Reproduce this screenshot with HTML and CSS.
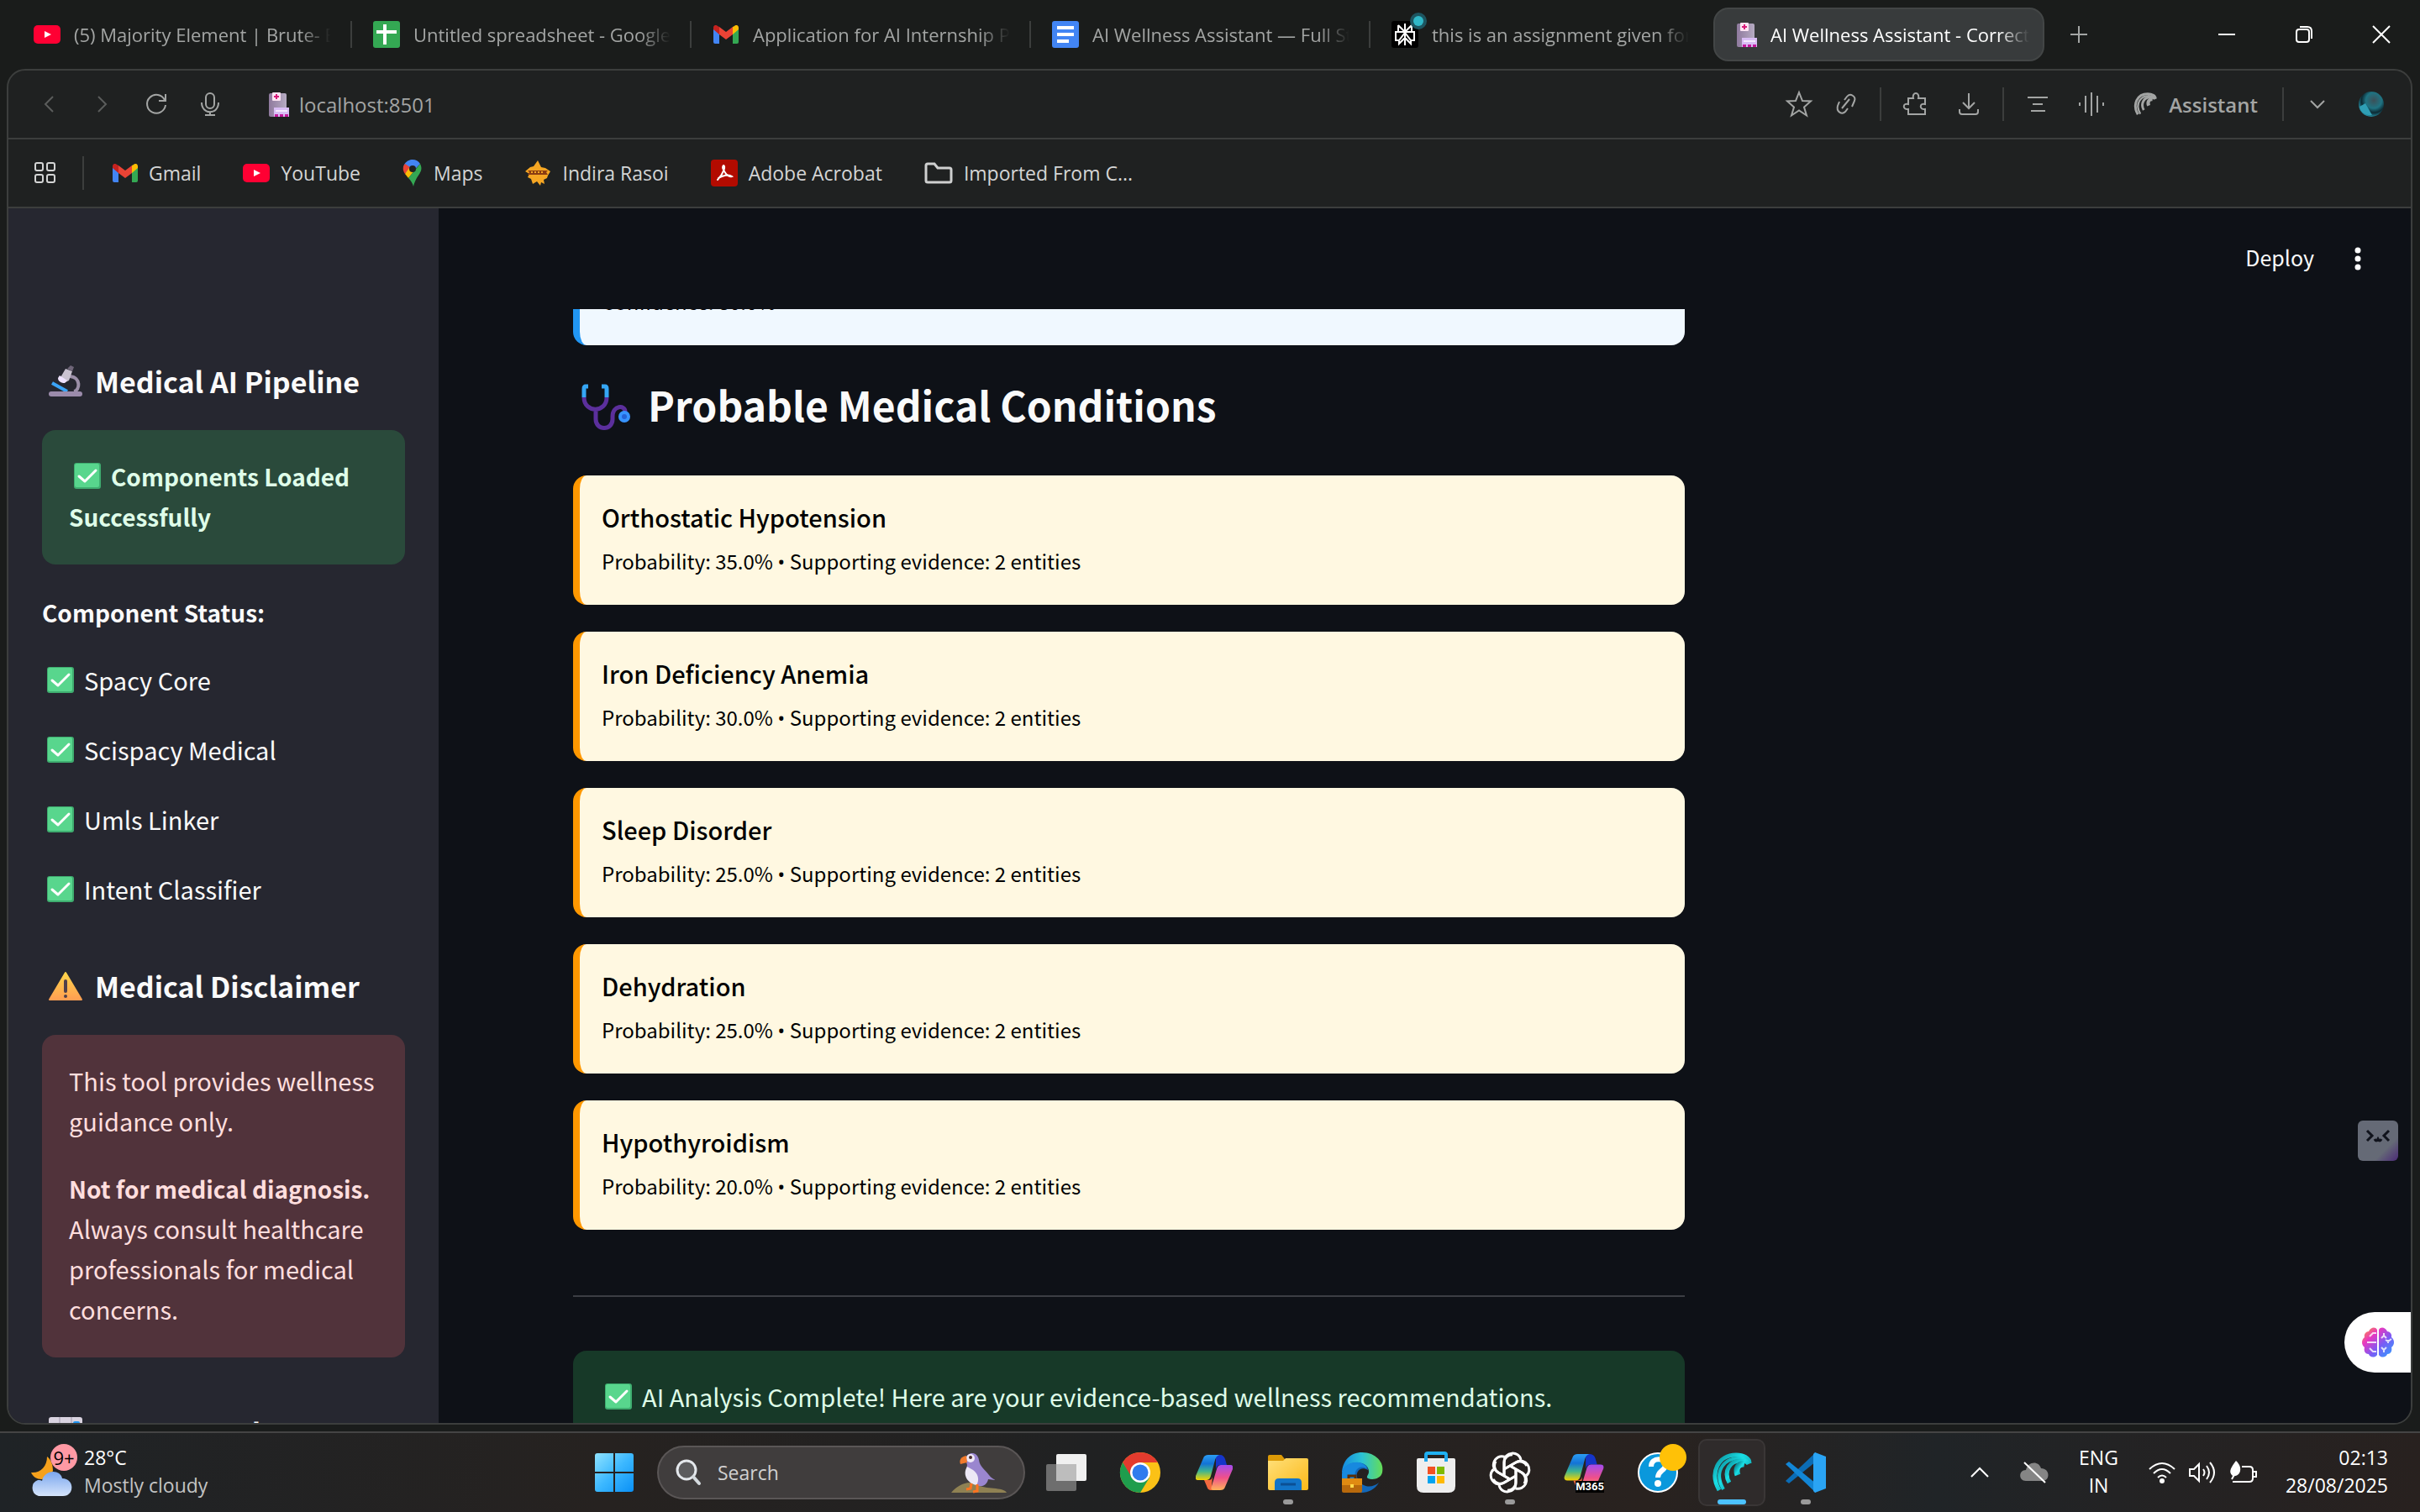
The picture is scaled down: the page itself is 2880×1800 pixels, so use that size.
FILE: index.html
```html
<!DOCTYPE html>
<html lang="en">
<head>
<meta charset="utf-8">
<title>AI Wellness Assistant</title>
<link rel="stylesheet" href="styles.css">
</head>
<body>
<svg class="defs" aria-hidden="true">
  <defs>
    <linearGradient id="copA" x1="0" y1="0" x2="0" y2="1"><stop offset="0" stop-color="#2b9df4"/><stop offset=".35" stop-color="#1373d6"/><stop offset=".65" stop-color="#3fb58f"/><stop offset="1" stop-color="#f6d300"/></linearGradient>
    <linearGradient id="copB" x1="0" y1="0" x2="0" y2="1"><stop offset="0" stop-color="#a24bf0"/><stop offset=".5" stop-color="#f0508a"/><stop offset="1" stop-color="#ffb35a"/></linearGradient>
    <linearGradient id="win" x1="0" y1="0" x2="1" y2="1"><stop offset="0" stop-color="#8fe3ff"/><stop offset=".5" stop-color="#3cb8ff"/><stop offset="1" stop-color="#0a90f5"/></linearGradient>
    <linearGradient id="edge" x1="0" y1="0" x2="1" y2="0"><stop offset="0" stop-color="#1489e0"/><stop offset=".5" stop-color="#2cc3d4"/><stop offset="1" stop-color="#66dd55"/></linearGradient>
    <linearGradient id="comet" x1="0" y1="0" x2="1" y2="1"><stop offset="0" stop-color="#0a8a96"/><stop offset=".4" stop-color="#19dfe6"/><stop offset="1" stop-color="#0b7a88"/></linearGradient>
    <linearGradient id="brain" x1="0" y1="0" x2="1" y2="1"><stop offset="0" stop-color="#ff9d2e"/><stop offset=".3" stop-color="#e838c0"/><stop offset=".6" stop-color="#7a5cf5"/><stop offset="1" stop-color="#2aa5ff"/></linearGradient>
    <linearGradient id="cloud" x1="0" y1="0" x2="0" y2="1"><stop offset="0" stop-color="#7ba7ee"/><stop offset="1" stop-color="#d5e4fb"/></linearGradient>
    <linearGradient id="folder" x1="0" y1="0" x2="1" y2="1"><stop offset="0" stop-color="#ffe07a"/><stop offset="1" stop-color="#fbb818"/></linearGradient>
    <linearGradient id="warn" x1="0" y1="0" x2="0" y2="1"><stop offset="0" stop-color="#ffd54a"/><stop offset="1" stop-color="#ff9f52"/></linearGradient>
    <linearGradient id="tower" x1="0" y1="0" x2="1" y2="0"><stop offset="0" stop-color="#8f7a9e"/><stop offset="1" stop-color="#b6abc2"/></linearGradient>
    <radialGradient id="orb" cx=".6" cy=".35" r=".7"><stop offset="0" stop-color="#3c5058"/><stop offset=".45" stop-color="#1f7382"/><stop offset=".7" stop-color="#0d2a33"/><stop offset="1" stop-color="#2aa6bd"/></radialGradient>
    <symbol id="i-check" viewBox="0 0 32 32"><rect width="32" height="31" rx="3" fill="#3fae70"/><rect x="1" y="1" width="29" height="28" rx="2" fill="#58d68d"/><path d="M6 16l7 6L26 9" fill="none" stroke="#fff" stroke-width="3" stroke-linecap="round" stroke-linejoin="round"/></symbol>
    <symbol id="i-gmail" viewBox="0 0 30 22"><path d="M0 3v17a2 2 0 0 0 2 2h5V8z" fill="#4285f4"/><path d="M23 8v14h5a2 2 0 0 0 2-2V3z" fill="#34a853"/><path d="M23 2v9l7-6V3c0-3-3-4-5-2z" fill="#fbbc04"/><path d="M7 2v9L0 5V3c0-3 3-4 5-2z" fill="#c5221f"/><path d="M7 11V2l8 6 8-6v9l-8 6z" fill="#ea4335"/></symbol>
    <symbol id="i-yt" viewBox="0 0 32 22"><rect width="32" height="22" rx="5" fill="#f03"/><path d="M13 7l8 4-8 4z" fill="#fff"/></symbol>
    <symbol id="i-hospital" viewBox="0 0 24 29"><rect y="1" width="21" height="28" rx="2" fill="url(#tower)"/><rect x="4" width="10" height="10" rx="1" fill="#fbe3f2"/><path d="M9 2v6M6 5h6" stroke="#d81b7a" stroke-width="2"/><rect x="6" y="18" width="18" height="11" fill="#d9bdf5"/><path d="M8 22h14" stroke="#f5eaff" stroke-width="2"/><path d="M7 27.500h4M13 27.500h4M19 27.500h4" stroke="#c2189c" stroke-width="3"/></symbol>
    <symbol id="i-cop" viewBox="0 0 44 42"><path d="M24 0h5c3 0 5 2 6 5l2 7h-7c-4 0-5 2-6 5z" fill="#1535c9"/><path d="M9 4c1-3 3-4 6-4h13c-3 1-4 3-5 6l-5 19c-1 4-3 5-6 5H3c-3 0-4-2-3-5z" fill="url(#copA)"/><path d="M10 30h5c3 0 4-1 5-4l-1 11c0 4 3 5 6 5h-6c-4 0-5-2-6-5z" fill="#f4693f"/><path d="M35 38c-1 3-3 4-6 4h-8c-3 0-3-2-2-5l6-20c1-4 3-5 6-5h10c3 0 4 2 3 5z" fill="url(#copB)"/></symbol>
    <symbol id="i-comet" viewBox="0 0 48 48"><g fill="none" stroke-linecap="butt"><path d="M9 45C-3 24 8 3 29 3c9 0 16 4 16 10" stroke-width="5"/><path d="M14 44C1 21 17 6 33 7c6 0 10 3 11 6" stroke-width="4"/><path d="M21 36c-8-14 2-27 14-26 5 0 8 2 9 4" stroke-width="5"/><path d="M31 27c-3-8 1-14 8-13" stroke-width="7"/></g></symbol>
  </defs>
</svg>

<header class="tabs">
  <nav class="tablist" aria-label="Tabs">
    <a class="tab" href="#"><svg class="fav" width="32" height="22"><use href="#i-yt"/></svg><span class="tab-name">(5) Majority Element | Brute- Better</span></a>
    <a class="tab" href="#"><svg class="fav" width="32" height="32" viewBox="0 0 32 32"><rect width="32" height="32" rx="3" fill="#34a853"/><path d="M14 4v24M4 13h24" stroke="#fff" stroke-width="4"/></svg><span class="tab-name">Untitled spreadsheet - Google Sheets</span></a>
    <a class="tab" href="#"><svg class="fav" width="32" height="22"><use href="#i-gmail"/></svg><span class="tab-name">Application for AI Internship Position</span></a>
    <a class="tab" href="#"><svg class="fav" width="32" height="32" viewBox="0 0 32 32"><rect width="32" height="32" rx="3" fill="#4285f4"/><path d="M6 8h20M6 16h20M6 24h14" stroke="#fff" stroke-width="4"/></svg><span class="tab-name">AI Wellness Assistant — Full Stack</span></a>
    <a class="tab" href="#"><svg class="fav" width="32" height="32" viewBox="0 0 32 32"><rect width="32" height="32" rx="3" fill="#000"/><path d="M16 3v26M8 5l8 8 8-8v9M8 5v9M5 13h22v10h-4l-7-9-7 9H5zM9 22v5l7-7 7 7v-5" fill="none" stroke="#fff" stroke-width="2"/><circle cx="32" cy="0" r="10" fill="#1d5560"/><circle cx="32" cy="0" r="6" fill="#30b8c8"/></svg><span class="tab-name">this is an assignment given for the</span></a>
    <a class="tab active" href="#" aria-current="page"><svg class="fav" width="24" height="29"><use href="#i-hospital"/></svg><span class="tab-name">AI Wellness Assistant - Corrected</span></a>
  </nav>
  <button class="icon-btn" aria-label="New tab"><svg width="20" height="20" viewBox="0 0 20 20"><path d="M10 0v20M0 10h20"/></svg></button>
  <div class="win-btns">
    <button class="icon-btn" aria-label="Minimise"><svg width="20" height="20" viewBox="0 0 20 20"><path d="M0 10h20"/></svg></button>
    <button class="icon-btn" aria-label="Restore"><svg width="20" height="20" viewBox="0 0 20 20"><rect x="1" y="4" width="15" height="15" rx="3"/><path d="M5 1h9q5 0 5 5v9"/></svg></button>
    <button class="icon-btn" aria-label="Close"><svg width="20" height="20" viewBox="0 0 20 20"><path d="M0 0l20 20M20 0L0 20"/></svg></button>
  </div>
</header>

<section class="window">
  <div class="toolbar">
    <div class="tools tools-left">
      <button class="icon-btn dim" aria-label="Back"><svg width="12" height="20" viewBox="0 0 12 20"><path d="M11 1L2 10l9 9"/></svg></button>
      <button class="icon-btn dim" aria-label="Forward"><svg width="12" height="20" viewBox="0 0 12 20"><path d="M1 1l9 9-9 9"/></svg></button>
      <button class="icon-btn" aria-label="Reload"><svg width="26" height="26" viewBox="0 0 26 26"><path d="M23 8A11 11 0 1 0 24 14M24 1v8h-8"/></svg></button>
      <button class="icon-btn" aria-label="Voice"><svg width="24" height="30" viewBox="0 0 24 30"><rect x="7" y="2" width="10" height="18" rx="5"/><path d="M2 13c0 15 20 15 20 0M12 24v4M6 28h12"/></svg></button>
    </div>
    <label class="address"><svg width="24" height="29"><use href="#i-hospital"/></svg><input type="text" value="localhost:8501" aria-label="Address"></label>
    <div class="tools tools-right">
      <button class="icon-btn star" aria-label="Bookmark"><svg width="32" height="32" viewBox="0 0 32 32"><path d="M16 2l4 10 10 .5-8 7 3 10-9-6-9 6 3-10-8-7 10-.5z"/></svg></button>
      <button class="icon-btn" aria-label="Copy link"><svg width="24" height="26" viewBox="0 0 24 26"><path d="M7 18l9-11M4 10l-2 5c-2 7 5 11 9 7l3-4M10 8l3-4c4-5 11 0 9 5l-3 7"/></svg></button>
      <span class="bar"></span>
      <button class="icon-btn" aria-label="Extensions"><svg width="30" height="30" viewBox="0 0 30 30"><path d="M7 8h6c-2-8 8-8 6 0h8v7c-7-2-7 7 0 6v6H7v-6c-7 1-7-8 0-6z"/></svg></button>
      <button class="icon-btn" aria-label="Downloads"><svg width="24" height="26" viewBox="0 0 24 26"><path d="M12 0v17M5 11l7 7 7-7M1 19v3q0 3 3 3h16q3 0 3-3v-3"/></svg></button>
      <span class="bar"></span>
      <button class="icon-btn" aria-label="Summary"><svg width="24" height="20" viewBox="0 0 24 20"><path d="M0 2h24M6 10h12M4 18h17"/></svg></button>
      <button class="icon-btn" aria-label="Voice mode"><svg width="32" height="30" viewBox="0 0 32 30"><path d="M2 13v4M9 5v20M16 1v28M23 5v20M30 13v4"/></svg></button>
      <button class="assistant"><svg width="28" height="30" viewBox="0 0 48 48" stroke="#a3a5a4"><use href="#i-comet"/></svg>Assistant</button>
      <span class="bar"></span>
      <button class="icon-btn" aria-label="More"><svg width="18" height="10" viewBox="0 0 18 10"><path d="M1 1l8 8 8-8"/></svg></button>
      <button class="icon-btn" aria-label="Profile"><svg width="32" height="32" viewBox="0 0 32 32"><circle class="filled" cx="16" cy="16" r="15" fill="url(#orb)"/><path class="filled" d="M9 15l8 14c-7 1-14-3-15-10z" fill="#2f9fb5"/></svg></button>
    </div>
  </div>

  <nav class="bookmarks" aria-label="Bookmarks">
    <button class="icon-btn" aria-label="Apps"><svg width="26" height="26" viewBox="0 0 26 26"><rect x="1" y="1" width="9" height="9" rx="2"/><rect x="15" y="1" width="9" height="9" rx="2"/><rect x="1" y="15" width="9" height="9" rx="2"/><rect x="15" y="15" width="9" height="9" rx="2"/></svg></button>
    <span class="bar"></span>
    <a href="#"><svg width="30" height="22"><use href="#i-gmail"/></svg>Gmail</a>
    <a href="#"><svg width="32" height="22"><use href="#i-yt"/></svg>YouTube</a>
    <a href="#"><svg width="24" height="32" viewBox="0 0 24 32"><path d="M12 0a11 11 0 0 1 9 5L8 19l-5-4C-2 7 5 0 12 0z" fill="#4285f4"/><path d="M3 5C0 8 0 13 3 17l6-8z" fill="#ea4335"/><path d="M3 17l4 5 9-11-8-1z" fill="#fbbc04"/><path d="M21 5c5 10-4 12-8 27-1-4-3-7-6-10z" fill="#34a853"/><circle cx="12" cy="11" r="4" fill="#1f2121"/></svg>Maps</a>
    <a href="#"><svg width="32" height="32" viewBox="0 0 32 32"><path d="M16 1l4 8 5 1 6 4-3 5-1 3-4 2 1 5-4-2-1 4-4-5-5 3-2-6-4-2 2-4-5-3 6-5 4-1z" fill="#f5a623"/><path d="M4 13l2 2-2 3h24l-2-3 2-2z" fill="#8a3c12"/><path d="M8 15h16" stroke="#f5a623" stroke-width="2" stroke-dasharray="2 2"/></svg>Indira Rasoi</a>
    <a href="#"><svg width="32" height="32" viewBox="0 0 32 32"><rect width="32" height="32" rx="4" fill="#b30b00"/><path d="M15 7c3 0 0 10-7 17M15 7c-3 2 4 15 10 13-4-3-11-1-16 2" fill="none" stroke="#fff" stroke-width="2" stroke-linecap="round"/></svg>Adobe Acrobat</a>
    <a href="#"><svg width="34" height="26" viewBox="0 0 34 26"><path d="M2 4q0-2 2-2h8l4 5h14q2 0 2 2v13q0 2-2 2H4q-2 0-2-2z" fill="none" stroke="#cfd0d0" stroke-width="3"/></svg>Imported From C...</a>
  </nav>

  <div class="page">
    <aside class="sidebar">
      <h3><svg width="40" height="38" viewBox="0 0 40 38"><path d="M25 13c14 1 12 17 5 18" fill="none" stroke="#9b8fa8" stroke-width="4"/><path d="M4 21l18 10" stroke="#3ba4f7" stroke-width="4"/><path d="M13 16L20 4l8 3-4 11-6 3z" fill="#c9c2d0"/><path d="M22 4l4-4 4 2-2 5z" fill="#6e6578"/><path d="M13 12l9 6-3 3c-4 0-8-2-8-6z" fill="#efe3ff"/><rect y="31" width="40" height="6" rx="3" fill="#9b8bab"/></svg>Medical AI Pipeline</h3>
      <div class="alert success"><strong><svg class="emoji" width="32" height="32"><use href="#i-check"/></svg>Components Loaded Successfully</strong></div>
      <p><strong>Component Status:</strong></p>
      <p class="status"><svg class="emoji" width="32" height="32"><use href="#i-check"/></svg>Spacy Core</p>
      <p class="status"><svg class="emoji" width="32" height="32"><use href="#i-check"/></svg>Scispacy Medical</p>
      <p class="status"><svg class="emoji" width="32" height="32"><use href="#i-check"/></svg>Umls Linker</p>
      <p class="status"><svg class="emoji" width="32" height="32"><use href="#i-check"/></svg>Intent Classifier</p>
      <h3><svg width="40" height="36" viewBox="0 0 40 36"><path d="M20 2L39 34H1z" fill="url(#warn)" stroke="url(#warn)" stroke-width="2" stroke-linejoin="round"/><path d="M20 12v12" stroke="#50404a" stroke-width="4" stroke-linecap="round"/><circle cx="20" cy="30" r="2" fill="#50404a"/></svg>Medical Disclaimer</h3>
      <div class="alert error"><p>This tool provides wellness guidance only.</p><p><strong>Not for medical diagnosis.</strong> Always consult healthcare professionals for medical concerns.</p></div>
      <h3><svg width="40" height="38" viewBox="0 0 40 38"><rect width="40" height="38" rx="3" fill="#d9d3e0"/><path d="M13 0v38M27 0v38" stroke="#bdb6c6" stroke-width="2"/><rect x="3" y="10" width="8" height="26" rx="2" fill="#7bc843"/><rect x="29" y="5" width="8" height="31" rx="2" fill="#2196f3"/></svg>Recent Analyses</h3>
    </aside>

    <main class="main">
      <div class="app-bar"><button class="deploy">Deploy</button><button class="icon-btn" aria-label="Menu"><svg width="8" height="28" viewBox="0 0 8 28"><circle class="filled" cx="4" cy="4" r="3.500" fill="#fff"/><circle class="filled" cx="4" cy="14" r="3.500" fill="#fff"/><circle class="filled" cx="4" cy="24" r="3.500" fill="#fff"/></svg></button></div>
      <div class="scroll">
        <div class="content">
          <article class="card blue"><h4>Dizziness</h4><p>Confidence: 80.0%</p></article>
          <h2><svg width="58" height="54" viewBox="0 0 58 54"><path d="M7 2H4q-2 0-2 3v10M23 2h4q2 0 2 3v10" fill="none" stroke="#35a6f5" stroke-width="5"/><path d="M2 15c0 19 27 19 27 0M16 30v11c0 14 20 14 20 0V38c0-14 15-14 15-6" fill="none" stroke="#5b2f9c" stroke-width="5"/><circle cx="50" cy="38" r="7" fill="#3793ff"/><circle cx="50" cy="38" r="3" fill="#2463d6"/></svg>Probable Medical Conditions</h2>
          <article class="card"><h4>Orthostatic Hypotension</h4><p>Probability: 35.0% <span class="dot">•</span> Supporting evidence: 2 entities</p></article>
          <article class="card"><h4>Iron Deficiency Anemia</h4><p>Probability: 30.0% <span class="dot">•</span> Supporting evidence: 2 entities</p></article>
          <article class="card"><h4>Sleep Disorder</h4><p>Probability: 25.0% <span class="dot">•</span> Supporting evidence: 2 entities</p></article>
          <article class="card"><h4>Dehydration</h4><p>Probability: 25.0% <span class="dot">•</span> Supporting evidence: 2 entities</p></article>
          <article class="card"><h4>Hypothyroidism</h4><p>Probability: 20.0% <span class="dot">•</span> Supporting evidence: 2 entities</p></article>
          <hr>
          <div class="alert done"><svg class="emoji" width="32" height="32"><use href="#i-check"/></svg>AI Analysis Complete! Here are your evidence-based wellness recommendations.</div>
        </div>
      </div>
    </main>
  </div>
  <button class="face" aria-label="Helper"><svg width="28" height="16" viewBox="0 0 28 16"><path d="M1 1l6 6-6 6M27 1l-6 6 6 6M10 11q2 4 4 0 2 4 4 0" fill="none" stroke="#10131c" stroke-width="3"/></svg></button>
  <button class="brain" aria-label="Brain assistant"><svg width="38" height="36" viewBox="0 0 38 36"><path d="M18 3v30c-3 4-9 3-10-1-5 0-6-5-5-8-4-3-4-9 0-12-1-4 2-7 5-7 2-5 8-6 10-2zM20 3v30c3 4 9 3 10-1 5 0 6-5 5-8 4-3 4-9 0-12 1-4-2-7-5-7-2-5-8-6-10-2z" fill="url(#brain)"/><path d="M17 7h-4l-4 4M17 18H6M17 29h-4l-4-4M26 7v3l-3 3M26 10l3 3M31 19v-4M28 15l3 2 4-3M23 24l3 3 3-3M26 27v3" fill="none" stroke="#fff" stroke-opacity=".8" stroke-width="2"/></svg></button>
</section>

<footer class="taskbar">
  <button class="weather"><svg width="50" height="58" viewBox="0 0 50 58"><path d="M20 10c0 12-8 20-19 19 4 10 20 12 26-2 0-7-2-13-7-17z" fill="#f5a11c"/><path d="M10 57a10 10 0 0 1-1-19c3 0 4 0 5 1 3-14 22-14 24-3 15 0 15 21 1 21z" fill="url(#cloud)"/></svg><span class="badge">9+</span><span class="two"><span>28°C</span><span class="soft">Mostly cloudy</span></span></button>
  <div class="apps">
    <button class="app" aria-label="Start"><svg width="46" height="46" viewBox="0 0 46 46"><path d="M3 0h19v22H0V3q0-3 3-3zM24 0h19q3 0 3 3v19H24zM0 24h22v22H3q-3 0-3-3zM24 24h22v19q0 3-3 3H24z" fill="url(#win)"/></svg></button>
    <label class="search"><svg width="30" height="30" viewBox="0 0 30 30"><circle cx="13" cy="12" r="11" fill="#5c5c5e" stroke="#e4e8ec" stroke-width="3"/><path d="M21 20l7 8" stroke="#d4dade" stroke-width="4" stroke-linecap="round"/></svg><input type="text" placeholder="Search" aria-label="Search"><svg width="66" height="48" viewBox="0 0 66 48"><path d="M0 48c8-10 22-16 32-9 8 5 30 2 34 9z" fill="#8f8153"/><path d="M17 8c2-9 14-10 16 1 1 8 6 10 12 18 4 5 7 5 7 6l-8-1c-1 5-5 9-10 8-10-1-18-12-15-25z" fill="#9a86cf"/><path d="M19 17c-6 9 0 20 11 22 4-6 2-14-4-18z" fill="#ece8f5"/><circle cx="23" cy="7" r="5" fill="#efe9f6"/><circle cx="23" cy="6" r="2" fill="#4a2c2c"/><path d="M18 4c-6 1-9 5-7 10l8-2z" fill="#f07a2c"/><path d="M24 37l-1 6-5 1M31 38v8l-5 1" fill="none" stroke="#ff7320" stroke-width="3"/></svg></label>
    <button class="app" aria-label="Task view"><svg width="48" height="44" viewBox="0 0 48 44"><rect x="12" width="36" height="32" rx="2" fill="#f0f0f0"/><rect y="12" width="36" height="32" rx="2" fill="#6e6e6e"/><rect x="12" y="12" width="24" height="20" fill="#bdbdbd"/></svg></button>
    <button class="app" aria-label="Chrome"><svg width="48" height="48" viewBox="0 0 48 48"><circle cx="24" cy="24" r="24" fill="#fbc116"/><path d="M3.200 12A24 24 0 0 1 44.800 12H24L13 30z" fill="#e33b2e"/><path d="M3.200 12A24 24 0 0 0 24 48l11-18-11 5-10-5z" fill="#1f9d4d"/><circle cx="24" cy="24" r="12" fill="#fff"/><circle cx="24" cy="24" r="9.500" fill="#2f7bee"/></svg></button>
    <button class="app" aria-label="Copilot"><svg width="44" height="42"><use href="#i-cop"/></svg></button>
    <button class="app open" aria-label="Explorer"><svg width="48" height="42" viewBox="0 0 48 42"><path d="M0 2q0-2 2-2h14l4 5v8H0z" fill="#dc9a06"/><path d="M0 7h18l3-3h25q2 0 2 2v34q0 2-2 2H2q-2 0-2-2z" fill="url(#folder)"/><path d="M8 42V33q0-5 5-5h22q5 0 5 5v9z" fill="#1274c8"/><path d="M15 35h18" stroke="#0b4f94" stroke-width="3"/></svg></button>
    <button class="app" aria-label="Edge"><svg width="48" height="48" viewBox="0 0 48 48"><path d="M0 26C0 10 10 0 24 0c16 0 27 12 24 24-2 8-12 9-17 7-3-2 1-4 1-8 0-6-5-10-12-10C10 13 2 18 0 26z" fill="url(#edge)"/><path d="M0 26c2-9 9-14 18-14 8 0 13 4 13 9-10-6-16 4-12 11 5 10 17 11 25 4-8 14-27 16-37 5C2 37 0 32 0 26z" fill="#1267b8"/><path d="M0 26C2 15 12 11 20 12c8 2 10 6 9 7-9-5-17 4-12 14H0z" fill="#1789df"/><rect y="31" width="24" height="17" rx="2" fill="#b8690c"/><path d="M0 31h24v8H0z" fill="#e08b12"/><path d="M8 31v-3h8v3" fill="none" stroke="#5a2d04" stroke-width="3"/><rect x="10" y="38" width="4" height="4" fill="#ffd94a"/></svg></button>
    <button class="app" aria-label="Store"><svg width="46" height="48" viewBox="0 0 46 48"><path d="M11 10V3q0-2 2-2h20q2 0 2 2v7" fill="none" stroke="#1fb1f2" stroke-width="4"/><path d="M0 9q0-2 2-2h42q2 0 2 2v31q0 8-8 8H8q-8 0-8-8z" fill="#eee"/><path d="M11 3v8M35 3v8" stroke="#1fa6ea" stroke-width="4"/><path d="M13 17h9v9h-9z" fill="#f25022"/><path d="M24 17h9v9h-9z" fill="#7fba00"/><path d="M13 28h9v9h-9z" fill="#00a4ef"/><path d="M24 28h9v9h-9z" fill="#ffb900"/></svg></button>
    <button class="app open" aria-label="ChatGPT"><svg width="48" height="48" viewBox="0 0 48 48"><g fill="none" stroke="#fff" stroke-width="3" stroke-linejoin="round"><g id="petal"><path d="M17 28V12c0-14 18-14 20-3M17 20l14-8c5-3 11 0 13 4"/></g><use href="#petal" transform="rotate(60 24 24)"/><use href="#petal" transform="rotate(120 24 24)"/><use href="#petal" transform="rotate(180 24 24)"/><use href="#petal" transform="rotate(240 24 24)"/><use href="#petal" transform="rotate(300 24 24)"/></g></svg></button>
    <button class="app" aria-label="M365 Copilot"><svg width="48" height="44"><use href="#i-cop"/></svg><span class="m365">M365</span></button>
    <button class="app" aria-label="Help"><svg width="48" height="48" viewBox="0 0 48 48"><circle cx="24" cy="24" r="23" fill="#0a98dc" stroke="#fff" stroke-width="2"/><path d="M16 17c0-12 18-11 17-1-1 6-9 6-9 14" fill="none" stroke="#fff" stroke-width="6"/><circle cx="24" cy="37" r="4" fill="#fff"/><circle cx="42" cy="6" r="16" fill="#ffc107"/></svg></button>
    <button class="app current" aria-label="Comet"><svg width="48" height="48" viewBox="0 0 48 48" stroke="url(#comet)"><use href="#i-comet"/></svg></button>
    <button class="app open" aria-label="Visual Studio Code"><svg width="48" height="48" viewBox="0 0 48 48"><path d="M0 34l4 3 32-26V0z" fill="#0b6cb5"/><path d="M0 14l4-3 32 26v11z" fill="#1286d6"/><path d="M35 0l13 5v38l-13 5-2-2V2z" fill="#2aa4f4"/></svg></button>
  </div>
  <div class="tray">
    <button class="icon-btn t-up" aria-label="Hidden icons"><svg width="22" height="12" viewBox="0 0 22 12"><path d="M1 11L11 1l10 10"/></svg></button>
    <button class="icon-btn t-cloud" aria-label="OneDrive"><svg width="34" height="26" viewBox="0 0 34 26"><path class="filled" d="M7 23c-9 0-9-13 0-13C9 0 22-2 25 8c11 0 11 15 2 15z" fill="#858585"/><path d="M5 1l25 24" /></svg></button>
    <button class="two center t-lang"><span>ENG</span><span>IN</span></button>
    <button class="net" aria-label="Network, sound, battery">
      <svg width="34" height="26" viewBox="0 0 34 26"><path d="M2 9q15-14 30 0M7 14q10-10 20 0M12 19q5-5 10 0"/><circle cx="17" cy="23" r="3" class="filled" fill="#fff"/></svg>
      <svg width="34" height="28" viewBox="0 0 34 28"><path d="M2 10h5l6-6v20l-6-6H2zM18 10q3 4 0 8M22 6q6 8 0 16M26 2q10 12 0 24"/></svg>
      <svg width="34" height="28" viewBox="0 0 34 28"><path d="M16 7h9q4 0 4 4v10q0 4-4 4H5M30 13h3v6h-3"/><path class="filled" d="M9 0c10 9 4 20-4 18C-1 13 4 7 9 0z" fill="#fff"/><path d="M4 22l5-9"/></svg>
    </button>
    <button class="two right"><span>02:13</span><span>28/08/2025</span></button>
  </div>
</footer>
</body>
</html>
```
FILE: styles.css
```css
* { box-sizing: border-box; }
html, body { height: 100%; }
body {
  margin: 0;
  display: flex;
  flex-direction: column;
  overflow: hidden;
  background: #1a1c1b;
  color: #fafafa;
  font-family: "Open Sans", "Noto Sans", sans-serif;
  font-size: 23px;
}
button, input { font: inherit; color: inherit; background: none; border: 0; padding: 0; margin: 0; outline: 0; }
a { color: inherit; text-decoration: none; }
h2, h3, h4, p { margin: 0; }
svg { flex: none; display: block; overflow: visible; }
.defs { position: absolute; width: 0; height: 0; }

.icon-btn { display: grid; place-items: center; width: 32px; height: 40px; flex: none; }
.icon-btn svg, .net svg { fill: none; stroke: currentColor; stroke-width: 2; }
.icon-btn .filled, .net .filled { stroke: none; }
.bar { width: 2px; height: 40px; background: #3c3e3d; flex: none; }

/* Tab strip */
.tabs { display: flex; align-items: center; height: 82px; flex: none; padding-left: 14px; color: #a3a5a4; font-size: 22px; }
.tablist { display: flex; margin-right: 25px; }
.tab { display: flex; align-items: center; gap: 16px; width: 404px; height: 64px; padding: 0 24px 0 26px; position: relative; }
.tab:not(.active):not(:nth-child(5))::after { content: ""; position: absolute; right: -1px; top: 16px; width: 2px; height: 32px; background: #3c3e3d; }
.tab.active { width: 394px; margin-left: 5px; padding: 0 16px 0 26px; border: 2px solid #434646; border-radius: 18px; background: #383b3c; color: #fff; }
.tab-name { flex: 1; overflow: hidden; white-space: nowrap; mask-image: linear-gradient(90deg, #000 88%, transparent); }
.win-btns { display: flex; gap: 60px; margin-left: auto; margin-right: 30px; color: #fff; }

/* Browser window */
.window { position: relative; flex: 1; min-height: 0; display: flex; flex-direction: column; margin: 0 9px 8px 8px; border: 2px solid #3c3e3d; border-radius: 22px; overflow: hidden; background: #1f2121; }
.toolbar, .bookmarks { display: flex; align-items: center; flex: none; height: 82px; border-bottom: 2px solid #3c3e3d; color: #a3a5a4; }
.tools { display: flex; align-items: center; }
.tools-left { gap: 32px; padding-left: 32px; }
.dim { color: #5b5d5c; }
.address { display: flex; align-items: center; gap: 12px; flex: 1; padding-left: 54px; font-size: 24px; }
.address input { flex: 1; }
.tools-right { padding-right: 15px; }
.tools-right .icon-btn { margin: 0 16px; }
.tools-right .star { margin-right: 8px; }
.tools-right .bar { margin: 0 8px; }
.assistant { display: flex; align-items: center; gap: 14px; margin: 0 21px 0 18px; font-size: 24px; font-weight: 600; }
.bookmarks { padding-left: 28px; color: #d4d5d5; }
.bookmarks .bar { margin: 0 34px 0 28px; }
.bookmarks a { display: flex; align-items: center; gap: 13px; margin-right: 50px; }

/* App page */
.page { display: flex; flex: 1; min-height: 0; font-family: "Noto Sans CJK SC", sans-serif; font-size: 29px; line-height: 48px; }
.sidebar { width: 512px; flex: none; display: flex; flex-direction: column; gap: 32px; padding: 148px 40px 0; background: #262730; overflow: hidden; }
.sidebar > * { flex: none; }
.sidebar h3 { display: flex; align-items: center; gap: 15px; padding: 33px 0 1px 8px; font-size: 34px; line-height: 50px; font-weight: 600; }
.status { line-height: 51px; }
strong { font-size: 28px; font-weight: 600; line-height: 1; }
.emoji { display: inline-block; vertical-align: -4px; margin: 0 12px 0 6px; }
.alert { border-radius: 16px; padding: 30px 32px 34px; }
.alert p + p { margin-top: 32px; }
.success { background: #2a4a3b; color: #dffde9; height: 160px; }
.error { background: #51333b; color: #ffdede; }
.done { background: #173928; color: #dffde9; height: 160px; }

.main { flex: 1; min-width: 0; display: flex; flex-direction: column; background: #0e1117; }
.app-bar { display: flex; align-items: center; justify-content: flex-end; gap: 36px; height: 120px; flex: none; padding-right: 47px; }
.deploy { padding-bottom: 4px; font-size: 25px; }
.scroll { flex: 1; min-height: 0; overflow: hidden; padding-left: 160px; }
.content { width: 100%; max-width: 1323px; margin-top: -111px; }
.card { height: 154px; margin-bottom: 32px; padding: 24px 26px; border-left: 8px solid #ff9800; border-radius: 16px; background: #fff8e1; color: #000; }
.card h4 { font-size: 29px; line-height: 50px; font-weight: 500; }
.card p { font-size: 24px; line-height: 56px; }
.card.blue { background: #f0f8ff; border-color: #2196f3; }
.dot { font-family: "Open Sans", sans-serif; }
.content h2 { display: flex; align-items: center; gap: 20px; height: 123px; margin: -32px 0 32px; padding: 16px 0 0 11px; font-size: 48px; line-height: 60px; font-weight: 600; }
.content h2 svg { margin-top: 8px; }
hr { border: 0; height: 2px; margin: 78px 0 64px; background: #3c3e44; }

/* Floating helpers */
.face { position: absolute; right: 15px; bottom: 312px; width: 48px; height: 48px; border-radius: 6px; background: linear-gradient(135deg, #656a76 70%, #4b2a78); display: grid; place-items: center; padding-bottom: 10px; }
.brain { position: absolute; right: 0; bottom: 60px; width: 79px; height: 72px; border-radius: 36px 0 0 36px; background: #fff; display: grid; place-items: center; }

/* Taskbar */
.taskbar { display: grid; grid-template-columns: 1fr auto 1fr; align-items: center; flex: none; height: 96px; border-top: 2px solid #444; background: linear-gradient(90deg, #1f2326, #262220 25%, #202122 45%, #29221f 68%, #202427 80%, #28211f); color: #fff; }
.two { display: flex; flex-direction: column; padding-bottom: 2px; line-height: 33px; text-align: left; }
.soft { color: #c3c3c3; }
.weather { position: relative; display: flex; align-items: center; gap: 14px; padding-left: 36px; }
.badge { position: absolute; left: 60px; top: 0; width: 32px; height: 32px; border-radius: 16px; background: #ff99a4; color: #000; line-height: 32px; text-align: center; font-size: 22px; }
.apps { display: flex; align-items: center; }
.app { position: relative; display: grid; place-items: center; width: 88px; height: 80px; }
.app.open::after { content: ""; position: absolute; left: 38px; bottom: 2px; width: 12px; height: 6px; border-radius: 3px; background: #9a9a9a; }
.app.current { width: 80px; margin: 0 4px; border: 2px solid #3a3636; border-radius: 10px; background: #2f2b2b; }
.app.current::after { content: ""; position: absolute; left: 21px; bottom: 0; width: 34px; height: 6px; border-radius: 3px; background: #4cc2ff; }
.m365 { position: absolute; right: 20px; bottom: 16px; background: #000; font: bold 13px/14px "Roboto", sans-serif; }
.search { display: flex; align-items: center; gap: 20px; width: 438px; height: 64px; margin: 0 5px 0 7px; padding: 0 20px; border: 2px solid #5a5656; border-radius: 32px; background: #403d3d; }
.search input { flex: 1; min-width: 0; }
.search input::placeholder { color: #d0d0d0; opacity: 1; }
.tray { display: flex; align-items: center; justify-content: flex-end; padding-right: 38px; }
.t-up { margin-right: 32px; }
.t-cloud { margin-right: 38px; }
.t-lang { margin-right: 35px; }
.center { text-align: center; }
.right { text-align: right; }
.net { display: flex; align-items: center; gap: 14px; margin-right: 34px; }
```
